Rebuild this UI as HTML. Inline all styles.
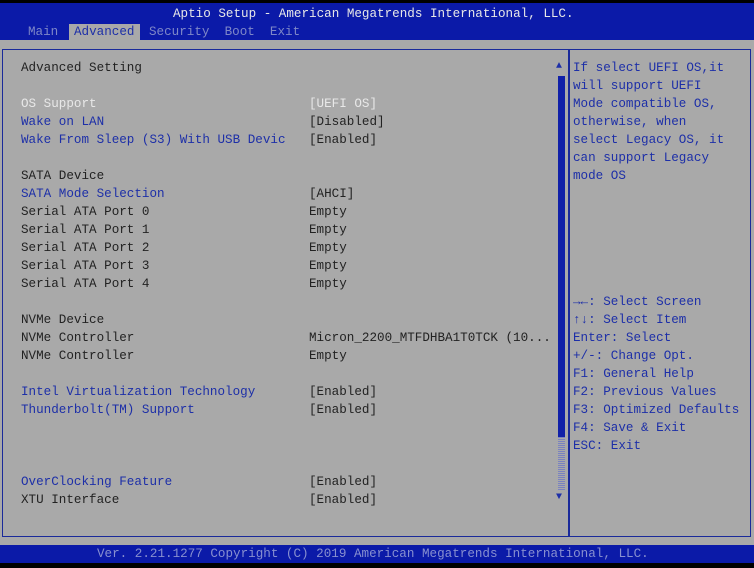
<!DOCTYPE html><html><head><style>
body{margin:0;width:754px;height:568px;background:#000;position:relative;overflow:hidden;font-family:"Liberation Mono",monospace;font-size:12.6px;}
.t{position:absolute;white-space:pre;line-height:18px;}
#hdr{position:absolute;left:0;top:3px;width:754px;height:37px;background:#0b1aa8;}
#body{position:absolute;left:0;top:40px;width:754px;height:505px;background:#a9a9a9;}
#box{position:absolute;left:2px;top:49px;width:747px;height:486px;border:1px solid #1a2a9a;}
#div{position:absolute;left:568px;top:49px;width:2px;height:488px;background:#1a2a9a;}
#ftr{position:absolute;left:0;top:545px;width:754px;height:18px;background:#0b1aa8;}
.w{color:#e8e8e8}.k{color:#222}.b{color:#1d2fa8}.g{color:#7f88c8}
</style></head><body>
<div id="hdr"></div>
<div class="t w" style="left:173px;top:5px">Aptio Setup - American Megatrends International, LLC.</div>
<div style="position:absolute;left:69px;top:24px;width:71px;height:16px;background:#a9a9a9"></div>
<div class="t g" style="left:28px;top:23px">Main</div>
<div class="t b" style="left:74px;top:23px">Advanced</div>
<div class="t g" style="left:149px;top:23px">Security  Boot  Exit</div>
<div id="body"></div>
<div id="box"></div><div id="div"></div>
<div class="t k" style="left:21px;top:59px">Advanced Setting</div>
<div class="t w" style="left:21px;top:95px">OS Support</div><div class="t w" style="left:309px;top:95px">[UEFI OS]</div>
<div class="t b" style="left:21px;top:113px">Wake on LAN</div><div class="t k" style="left:309px;top:113px">[Disabled]</div>
<div class="t b" style="left:21px;top:131px">Wake From Sleep (S3) With USB Devic</div><div class="t k" style="left:309px;top:131px">[Enabled]</div>
<div class="t k" style="left:21px;top:167px">SATA Device</div>
<div class="t b" style="left:21px;top:185px">SATA Mode Selection</div><div class="t k" style="left:309px;top:185px">[AHCI]</div>
<div class="t k" style="left:21px;top:203px">Serial ATA Port 0
Serial ATA Port 1
Serial ATA Port 2
Serial ATA Port 3
Serial ATA Port 4</div>
<div class="t k" style="left:309px;top:203px">Empty
Empty
Empty
Empty
Empty</div>
<div class="t k" style="left:21px;top:311px">NVMe Device
NVMe Controller
NVMe Controller</div>
<div class="t k" style="left:309px;top:329px">Micron_2200_MTFDHBA1T0TCK (10...
Empty</div>
<div class="t b" style="left:21px;top:383px">Intel Virtualization Technology
Thunderbolt(TM) Support</div>
<div class="t k" style="left:309px;top:383px">[Enabled]
[Enabled]</div>
<div class="t b" style="left:21px;top:473px">OverClocking Feature</div><div class="t k" style="left:309px;top:473px">[Enabled]</div>
<div class="t k" style="left:21px;top:491px">XTU Interface</div><div class="t k" style="left:309px;top:491px">[Enabled]</div>
<div class="t b" style="left:556px;top:58px;font-size:10px">▲</div>
<div style="position:absolute;left:558px;top:76px;width:7px;height:361px;background:#1020a8"></div>
<div style="position:absolute;left:558px;top:437px;width:7px;height:54px;background:repeating-linear-gradient(#7a82c0 0 1px,#a9a9a9 1px 2px)"></div>
<div class="t b" style="left:556px;top:489px;font-size:10px">▼</div>
<div class="t b" style="left:573px;top:59px">If select UEFI OS,it
will support UEFI
Mode compatible OS,
otherwise, when
select Legacy OS, it
can support Legacy
mode OS</div>
<div class="t b" style="left:573px;top:293px">→←: Select Screen
↑↓: Select Item
Enter: Select
+/-: Change Opt.
F1: General Help
F2: Previous Values
F3: Optimized Defaults
F4: Save &amp; Exit
ESC: Exit</div>
<div id="ftr"></div>
<div class="t" style="left:97px;top:545px;color:#8890d0">Ver. 2.21.1277 Copyright (C) 2019 American Megatrends International, LLC.</div>
</body></html>
